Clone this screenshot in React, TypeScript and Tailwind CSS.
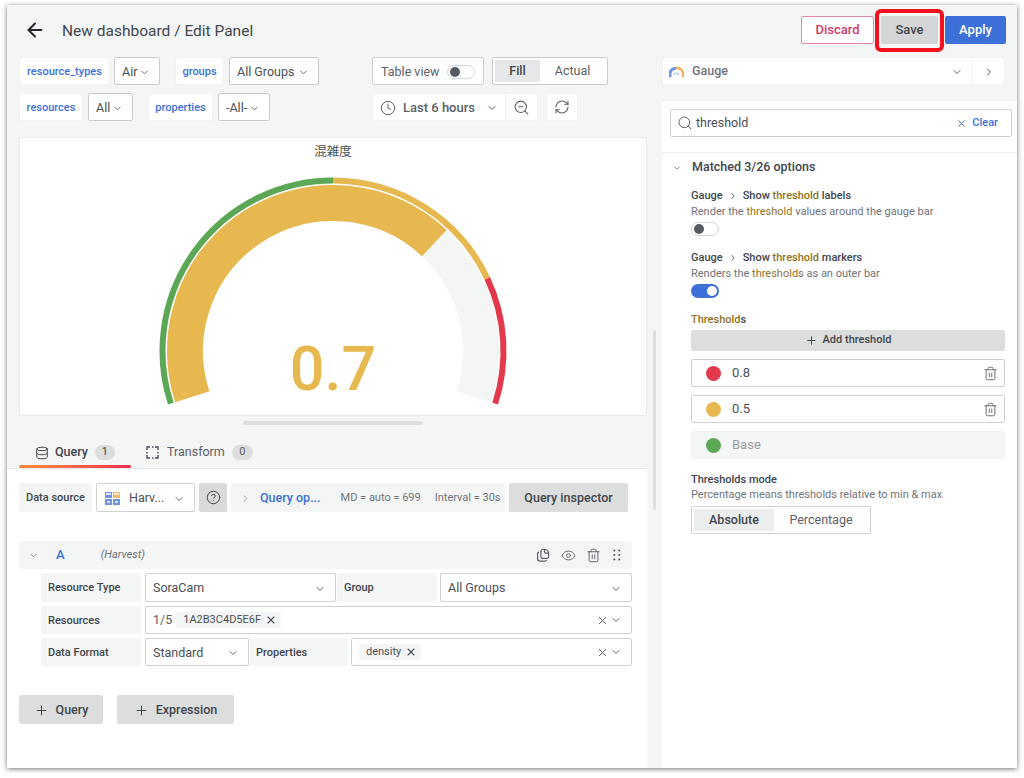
import { ArrowLeft, ChevronDown, ChevronRight, CircleHelp, Clock, Database, Eye, Plus, RefreshCw, Search, Trash2, X, ZoomOut } from 'lucide-react'
import type { ReactNode } from 'react'

const CX = 314
const CY = 214

// 角度はゲージ左下端からの時計回り (全体216度)
function arc(r: number, from: number, to: number) {
  const pt = (t: number) => {
    const a = ((t - 108) * Math.PI) / 180
    return `${(CX + r * Math.sin(a)).toFixed(2)} ${(CY - r * Math.cos(a)).toFixed(2)}`
  }
  return `M ${pt(from)} A ${r} ${r} 0 ${to - from > 180 ? 1 : 0} 1 ${pt(to)}`
}

function VarLabel({ children, className }: { children: ReactNode; className: string }) {
  return <div className={`h-[28px] pt-[2px] flex items-center justify-center bg-white rounded-[2px] text-[11px] font-medium text-[#3d71d9] border border-[#f0f1f1] ${className}`}>{children}</div>
}

function VarSelect({ children, className }: { children: ReactNode; className: string }) {
  return (
    <div className={`h-[28px] pt-[2px] flex items-center justify-between pl-[7px] pr-[9px] bg-white border border-[#c9cbcc] rounded-[2px] text-[12.5px] text-[#4a4f55] ${className}`}>
      {children}
      <ChevronDown size={11} strokeWidth={2} className="text-[#5b6066]" />
    </div>
  )
}

function FieldLabel({ children, className }: { children: ReactNode; className: string }) {
  return <div className={`pt-[2px] flex items-center pl-[7px] bg-[#f4f5f5] rounded-[2px] text-[11px] font-medium text-[#41464c] shrink-0 ${className}`}>{children}</div>
}

function Select({ children, className }: { children: ReactNode; className: string }) {
  return (
    <div className={`pt-[2px] flex items-center justify-between pl-[7px] pr-[9px] bg-white border border-[#cfd1d2] rounded-[2px] text-[12.5px] text-[#4a4f55] shrink-0 ${className}`}>
      {children}
      <ChevronDown size={12} className="text-[#5b6066]" />
    </div>
  )
}

function Tag({ children }: { children: ReactNode }) {
  return (
    <span className="h-[16px] flex items-center gap-[4px] pl-[7px] pr-[4px] bg-[#f4f5f5] rounded-[2px] text-[11px] text-[#4a4f55]">
      {children}
      <X size={12} strokeWidth={2.2} className="text-[#4a4f55]" />
    </span>
  )
}

function Gold({ children }: { children: ReactNode }) {
  return <span className="text-[#8f7426]">{children}</span>
}

function Toggle({ on }: { on?: boolean }) {
  if (on) {
    return (
      <div className="w-[28px] h-[14px] rounded-full bg-[#3d71d9] flex items-center justify-end pr-[2px]">
        <div className="w-[10px] h-[10px] rounded-full bg-white" />
      </div>
    )
  }
  return (
    <div className="w-[28px] h-[14px] rounded-full bg-white border border-[#d2d4d5] flex items-center pl-[2px]">
      <div className="w-[10px] h-[10px] rounded-full bg-[#565b61]" />
    </div>
  )
}

function ThresholdRow({ color, value, base }: { color: string; value: string; base?: boolean }) {
  return (
    <div className={`h-[28px] flex items-center pl-[14px] pr-[6px] rounded-[2px] ${base ? 'bg-[#f4f5f5] border border-[#f0f1f1]' : 'bg-white border border-[#cfd1d2]'}`}>
      <span className={`w-[15px] h-[15px] rounded-full ${color}`} />
      <span className={`ml-[11px] text-[13px] flex-1 ${base ? 'text-[#9a9ea2]' : 'text-[#4a4f55]'}`}>{value}</span>
      {!base && <Trash2 size={15} strokeWidth={1.5} className="text-[#64696e]" />}
    </div>
  )
}

export default function App() {
  return (
    <div className="w-[1024px] h-[778px] bg-white pl-[7px] pt-[5px] font-['Roboto','Noto_Sans_CJK_JP',sans-serif]">
      <div className="relative w-[1010px] h-[763px] bg-[#f4f5f5] flex flex-col shadow-[0_1px_5px_rgba(0,0,0,0.55)]">

        {/* ヘッダー */}
        <div className="h-[52px] shrink-0 flex items-start pt-[11px] pl-[17px] pr-[11px]">
          <ArrowLeft size={22} strokeWidth={2.2} className="text-[#24292e] mt-[3px]" />
          <h1 className="ml-[16px] mt-[4px] text-[15.5px] leading-[22px] text-[#41464c]">New dashboard / Edit Panel</h1>
          <div className="ml-auto flex items-center">
            <button className="h-[28px] w-[73px] bg-white border border-[#e48aa5] rounded-[2px] text-[13px] font-medium text-[#d1386b]">Discard</button>
            <div className="relative ml-[7px]">
              <button className="block h-[28px] w-[57px] bg-[#d4d5d6] rounded-[2px] text-[13px] font-medium text-[#41464c]">Save</button>
              <div className="absolute -left-[6px] -right-[6px] -top-[7px] -bottom-[8px] border-[4px] border-[#f5101c] rounded-[6px]" />
            </div>
            <button className="ml-[7px] h-[28px] w-[61px] bg-[#3d71d9] rounded-[2px] text-[13px] font-medium text-white">Apply</button>
          </div>
        </div>

        <div className="flex-1 flex min-h-0">
          {/* 左カラム */}
          <div className="w-[640px] shrink-0 flex flex-col">
            <div className="h-[80px] shrink-0 pl-[12px] flex">
              <div className="w-[353px] flex flex-col gap-[8px]">
                <div className="flex items-center">
                  <VarLabel className="w-[91px]">resource_types</VarLabel>
                  <VarSelect className="ml-[4px] w-[46px]">Air</VarSelect>
                  <VarLabel className="ml-[15px] w-[49px]">groups</VarLabel>
                  <VarSelect className="ml-[5px] w-[90px]">All Groups</VarSelect>
                </div>
                <div className="flex items-center">
                  <VarLabel className="w-[64px]">resources</VarLabel>
                  <VarSelect className="ml-[5px] w-[45px]">All</VarSelect>
                  <VarLabel className="ml-[15px] w-[65px]">properties</VarLabel>
                  <VarSelect className="ml-[5px] w-[52px]">-All-</VarSelect>
                </div>
              </div>
              <div className="flex flex-col gap-[8px]">
                <div className="flex items-center gap-[8px]">
                  <div className="h-[28px] w-[112px] pt-[2px] flex items-center justify-between px-[8px] bg-white border border-[#cfd1d2] rounded-[2px] text-[12.5px] text-[#5b6066]">
                    Table view
                    <div className="w-[28px] h-[14px] rounded-full bg-white border border-[#d2d4d5] flex items-center pl-[2px]">
                      <div className="w-[10px] h-[10px] rounded-full bg-[#565b61]" />
                    </div>
                  </div>
                  <div className="h-[28px] w-[116px] flex p-[2px] bg-white border border-[#c9cbcc] rounded-[2px] text-[12.5px]">
                    <div className="w-[45px] pt-[1px] flex items-center justify-center bg-[#e6e7e8] font-medium text-[#41464c] rounded-[1px]">Fill</div>
                    <div className="flex-1 pt-[1px] flex items-center justify-center text-[#5b6066]">Actual</div>
                  </div>
                </div>
                <div className="flex items-center">
                  <div className="h-[28px] w-[134px] pt-[2px] flex items-center pl-[7px] pr-[7px] bg-white border border-[#f0f1f1] text-[13px] font-medium text-[#5b6066]">
                    <Clock size={16} strokeWidth={1.5} />
                    <span className="ml-[7px] flex-1">Last 6 hours</span>
                    <ChevronDown size={12} />
                  </div>
                  <div className="h-[28px] w-[32px] flex items-center justify-center bg-white border border-l-0 border-[#f0f1f1] text-[#5b6066]">
                    <ZoomOut size={17} strokeWidth={1.5} />
                  </div>
                  <div className="ml-[8px] h-[28px] w-[32px] flex items-center justify-center bg-white border border-[#f0f1f1] text-[#5b6066]">
                    <RefreshCw size={16} strokeWidth={1.6} />
                  </div>
                </div>
              </div>
            </div>

            {/* ゲージパネル */}
            <div className="ml-[12px] w-[628px] h-[279px] shrink-0 flex flex-col bg-white border border-[#e9eaea] rounded-[2px]">
              <div className="h-[28px] shrink-0 flex items-center justify-center text-[12.5px] text-[#4a4f55]">混雑度</div>
              <svg width="626" height="249" viewBox="1 29 626 249">
                <path d={arc(148, 0, 216)} fill="none" stroke="#f4f5f5" strokeWidth="36" />
                <path d={arc(148, 0, 151.2)} fill="none" stroke="#e6b84f" strokeWidth="36" />
                <path d={arc(170.5, 0, 108)} fill="none" stroke="#5ba755" strokeWidth="6" />
                <path d={arc(170.5, 108, 172.8)} fill="none" stroke="#e6b84f" strokeWidth="6" />
                <path d={arc(170.5, 172.8, 216)} fill="none" stroke="#e23a4c" strokeWidth="6" />
                <text x={CX} y="253" textAnchor="middle" fontSize="61" fontWeight="500" fill="#e6b84f">0.7</text>
              </svg>
            </div>

            <div className="h-[24px] shrink-0 pl-[236px] pt-[5px]">
              <div className="w-[180px] h-[4px] rounded-full bg-[#dcdee0]" />
            </div>

            {/* タブ */}
            <div className="h-[28px] shrink-0 pl-[12px] flex">
              <div className="relative w-[112px] pt-[5px] pl-[16px] text-[12.5px] font-medium text-[#41464c]">
                <div className="h-[15px] flex items-center">
                  <Database size={14} strokeWidth={1.7} />
                  <span className="ml-[6px]">Query</span>
                  <span className="ml-[7px] w-[20px] h-[15px] rounded-full bg-[#dcdddd] flex items-center justify-center text-[11px] font-normal">1</span>
                </div>
                <div className="absolute left-0 right-0 bottom-0 h-[3px] rounded-full bg-gradient-to-r from-[#f78a3c] to-[#ef2a4c]" />
              </div>
              <div className="ml-[15px] pt-[5px] text-[12.5px] text-[#5b6066]">
                <div className="h-[15px] flex items-center">
                  <svg width="13" height="13" viewBox="0 0 13 13" fill="none" stroke="#4a4f55" strokeWidth="1.4">
                    <path d="M1 4V1h3M9 1h3v3M12 9v3H9M4 12H1V9" />
                    <path d="M6 1h1.5M6 12h1.5M1 6v1.5M12 6v1.5" />
                  </svg>
                  <span className="ml-[8px]">Transform</span>
                  <span className="ml-[7px] w-[21px] h-[15px] rounded-full bg-[#dcdddd] flex items-center justify-center text-[11px]">0</span>
                </div>
              </div>
            </div>

            {/* クエリ */}
            <div className="flex-1 bg-white border-t border-[#e9eaea] pt-[14px] pl-[12px]">
              <div className="flex h-[29px] w-[609px] gap-[4px]">
                <FieldLabel className="h-[29px] w-[73px]">Data source</FieldLabel>
                <div className="h-[29px] w-[99px] pt-[2px] flex items-center pl-[8px] pr-[9px] bg-white border border-[#cfd1d2] rounded-[2px] text-[12.5px] text-[#4a4f55]">
                  <svg width="15" height="13" viewBox="0 0 15 13" className="shrink-0">
                    <rect x="0" y="0" width="7" height="6" fill="#6e93dd" />
                    <rect x="8" y="0" width="7" height="6" fill="#f2b973" />
                    <rect x="9" y="1" width="5" height="2" fill="#fde9cf" />
                    <rect x="1" y="1" width="5" height="2" fill="#dbe6f8" />
                    <rect x="0" y="7" width="7" height="6" fill="#6e93dd" />
                    <rect x="8" y="7" width="7" height="6" fill="#6e93dd" />
                    <rect x="2" y="9" width="3" height="2" fill="#dbe6f8" />
                    <rect x="10" y="9" width="3" height="2" fill="#dbe6f8" />
                  </svg>
                  <span className="ml-[9px] flex-1">Harv...</span>
                  <ChevronDown size={12} className="text-[#5b6066]" />
                </div>
                <div className="w-[28px] flex items-center justify-center bg-[#d9dadb] rounded-[2px] text-[#41464c]">
                  <CircleHelp size={15} strokeWidth={1.6} />
                </div>
                <div className="w-[274px] pt-[2px] flex items-center bg-[#f4f5f5] rounded-[2px]">
                  <ChevronRight size={11} className="ml-[9px] text-[#9a9ea2]" />
                  <span className="ml-[9px] text-[12.5px] font-medium text-[#3d71d9]">Query op...</span>
                  <span className="ml-[20px] text-[11px] text-[#6f7479]">MD = auto = 699</span>
                  <span className="ml-[14px] text-[11px] text-[#6f7479]">Interval = 30s</span>
                </div>
                <button className="w-[119px] pt-[2px] bg-[#dcdddd] rounded-[2px] text-[12.5px] font-medium text-[#41464c]">Query inspector</button>
              </div>

              <div className="mt-[29px] h-[28px] w-[613px] flex items-center bg-[#f4f5f5] rounded-[2px]">
                <ChevronDown size={11} className="ml-[9px] text-[#7b8085]" />
                <span className="ml-[17px] text-[13px] font-medium text-[#3d71d9]">A</span>
                <span className="ml-[36px] text-[11px] italic text-[#6f7479]">(Harvest)</span>
                <svg width="14" height="14" viewBox="0 0 14 14" fill="none" stroke="#5b6066" strokeWidth="1.2" className="ml-auto">
                  <path d="M6.5 1.5h2.2a4 4 0 0 1 4 4v3.2a1.6 1.6 0 0 1-1.6 1.6H6.5a1.6 1.6 0 0 1-1.6-1.6V3.1a1.6 1.6 0 0 1 1.6-1.6z" />
                  <path d="M3 4.2A1.8 1.8 0 0 0 1.6 6v4.6a2.6 2.6 0 0 0 2.6 2.6h4.6a1.8 1.8 0 0 0 1.7-1.3" />
                  <path d="M8.5 1.6v2.2a1.4 1.4 0 0 0 1.4 1.4h2.7" />
                </svg>
                <Eye size={15} strokeWidth={1.5} className="ml-[11px] text-[#5b6066]" />
                <Trash2 size={15} strokeWidth={1.5} className="ml-[10px] text-[#5b6066]" />
                <svg width="8" height="12" viewBox="0 0 8 12" fill="#5b6066" className="ml-[12px] mr-[11px]">
                  <circle cx="1.3" cy="1.5" r="1.1" /><circle cx="6.3" cy="1.5" r="1.1" />
                  <circle cx="1.3" cy="6" r="1.1" /><circle cx="6.3" cy="6" r="1.1" />
                  <circle cx="1.3" cy="10.5" r="1.1" /><circle cx="6.3" cy="10.5" r="1.1" />
                </svg>
              </div>

              <div className="ml-[22px] mt-[4px] w-[591px] flex flex-col gap-[4px]">
                <div className="flex items-center">
                  <FieldLabel className="h-[29px] w-[100px] mr-[4px]">Resource Type</FieldLabel>
                  <Select className="h-[29px] w-[191px]">SoraCam</Select>
                  <FieldLabel className="h-[29px] w-[100px] ml-[1px] mr-[3px]">Group</FieldLabel>
                  <Select className="h-[29px] w-[192px]">All Groups</Select>
                </div>
                <div className="flex items-center">
                  <FieldLabel className="h-[28px] w-[100px] mr-[4px]">Resources</FieldLabel>
                  <div className="h-[28px] flex-1 flex items-center pl-[7px] pr-[9px] bg-white border border-[#cfd1d2] rounded-[2px] text-[12.5px] text-[#5b6066]">
                    <span className="mr-[4px]">1/5</span>
                    <Tag>1A2B3C4D5E6F</Tag>
                    <X size={13} strokeWidth={1.8} className="ml-auto mr-[1px]" />
                    <ChevronDown size={12} />
                  </div>
                </div>
                <div className="flex items-center">
                  <FieldLabel className="h-[28px] w-[100px] mr-[4px]">Data Format</FieldLabel>
                  <Select className="h-[28px] w-[104px]">Standard</Select>
                  <FieldLabel className="h-[28px] w-[99px] mr-[3px]">Properties</FieldLabel>
                  <div className="h-[28px] flex-1 flex items-center pl-[7px] pr-[9px] bg-white border border-[#cfd1d2] rounded-[2px] text-[#5b6066]">
                    <Tag>density</Tag>
                    <X size={13} strokeWidth={1.8} className="ml-auto mr-[1px]" />
                    <ChevronDown size={12} />
                  </div>
                </div>
              </div>

              <div className="mt-[29px] flex gap-[14px]">
                <button className="h-[29px] w-[84px] pt-[2px] flex items-center justify-center gap-[7px] bg-[#dcdddd] rounded-[2px] text-[12.5px] font-medium text-[#41464c]">
                  <Plus size={15} strokeWidth={1.6} />Query
                </button>
                <button className="h-[29px] w-[117px] pt-[2px] flex items-center justify-center gap-[7px] bg-[#dcdddd] rounded-[2px] text-[12.5px] font-medium text-[#41464c]">
                  <Plus size={15} strokeWidth={1.6} />Expression
                </button>
              </div>
            </div>
          </div>

          {/* スクロールバー */}
          <div className="absolute left-[646px] top-[325px] w-[3px] h-[180px] rounded-full bg-[#dcdee0]" />

          {/* 右カラム */}
          <div className="ml-[15px] flex-1 flex flex-col">
            <div className="h-[28px] w-[343px] pt-[1px] shrink-0 flex items-center bg-white border border-[#f0f1f1] rounded-[2px]">
              <svg width="15" height="12" viewBox="0 0 15 12" fill="none" className="ml-[6px]">
                <path d="M1.6 11 A6 6 0 0 1 7 2.2" stroke="#6e93dd" strokeWidth="3" />
                <path d="M7 2.2 A6 6 0 0 1 13.4 11" stroke="#f2b25f" strokeWidth="2.4" />
                <path d="M5 9 A2.6 2.6 0 0 1 10 9" stroke="#b9c8e6" strokeWidth="1.4" />
              </svg>
              <span className="ml-[8px] flex-1 text-[12.5px] font-medium text-[#6f7479]">Gauge</span>
              <ChevronDown size={12} className="mr-[9px] text-[#5b6066]" />
              <div className="w-[32px] h-full border-l border-[#f0f1f1] flex items-center justify-center">
                <ChevronRight size={12} className="text-[#5b6066]" />
              </div>
            </div>

            <div className="mt-[15px] flex-1 bg-white border-t border-[#eceded] pt-[8px]">
              <div className="ml-[8px] w-[342px] h-[28px] flex items-center pl-[6px] pr-[13px] bg-white border border-[#cfd1d2] rounded-[2px] text-[12.5px] text-[#4a4f55]">
                <Search size={16} strokeWidth={1.5} className="text-[#5b6066]" />
                <span className="ml-[3px] flex-1">threshold</span>
                <X size={11} strokeWidth={2} className="text-[#3d71d9]" />
                <span className="ml-[5px] text-[11px] font-medium text-[#3d71d9]">Clear</span>
              </div>
              <div className="mt-[15px] border-t border-[#eceded]" />

              <div className="mt-[6px] h-[17px] flex items-center pl-[10px] text-[12.5px] font-medium text-[#41464c]">
                <ChevronDown size={10} strokeWidth={2} className="text-[#5b6066]" />
                <span className="ml-[10px]">Matched 3/26 options</span>
              </div>

              <div className="ml-[29px] mr-[12px]">
                <div className="mt-[12px] h-[16px] flex items-center text-[11px] font-medium text-[#41464c]">
                  Gauge<ChevronRight size={10} strokeWidth={2} className="mx-[5px]" />Show&nbsp;<Gold>threshold</Gold>&nbsp;labels
                </div>
                <div className="h-[16px] flex items-center text-[11px] text-[#6f7479]">Render the&nbsp;<Gold>threshold</Gold>&nbsp;values around the gauge bar</div>
                <div className="mt-[2px]"><Toggle /></div>

                <div className="mt-[14px] h-[16px] flex items-center text-[11px] font-medium text-[#41464c]">
                  Gauge<ChevronRight size={10} strokeWidth={2} className="mx-[5px]" />Show&nbsp;<Gold>threshold</Gold>&nbsp;markers
                </div>
                <div className="h-[16px] flex items-center text-[11px] text-[#6f7479]">Renders the&nbsp;<Gold>threshold</Gold>s as an outer bar</div>
                <div className="mt-[2px]"><Toggle on /></div>

                <div className="mt-[14px] h-[16px] flex items-center text-[11px] font-medium text-[#41464c]"><Gold>Threshold</Gold>s</div>
                <button className="mt-[2px] w-[314px] h-[21px] flex items-center justify-center gap-[5px] bg-[#dcdddd] rounded-[2px] text-[11px] font-medium text-[#41464c]">
                  <Plus size={13} strokeWidth={1.8} />Add threshold
                </button>

                <div className="mt-[8px] w-[314px] flex flex-col gap-[8px]">
                  <ThresholdRow color="bg-[#e23a4c]" value="0.8" />
                  <ThresholdRow color="bg-[#e6b84f]" value="0.5" />
                  <ThresholdRow color="bg-[#5ba755]" value="Base" base />
                </div>

                <div className="mt-[13px] h-[16px] flex items-center text-[11px] font-medium text-[#41464c]">Thresholds mode</div>
                <div className="h-[15px] flex items-center text-[11px] text-[#6f7479]">Percentage means thresholds relative to min &amp; max</div>
                <div className="mt-[3px] w-[180px] h-[28px] flex p-[2px] bg-white border border-[#cfd1d2] rounded-[2px] text-[12.5px]">
                  <div className="w-[80px] flex items-center justify-center bg-[#eceded] font-medium text-[#41464c] rounded-[1px]">Absolute</div>
                  <div className="flex-1 flex items-center justify-center text-[#5b6066]">Percentage</div>
                </div>
              </div>
            </div>
          </div>
        </div>
      </div>
    </div>
  )
}
